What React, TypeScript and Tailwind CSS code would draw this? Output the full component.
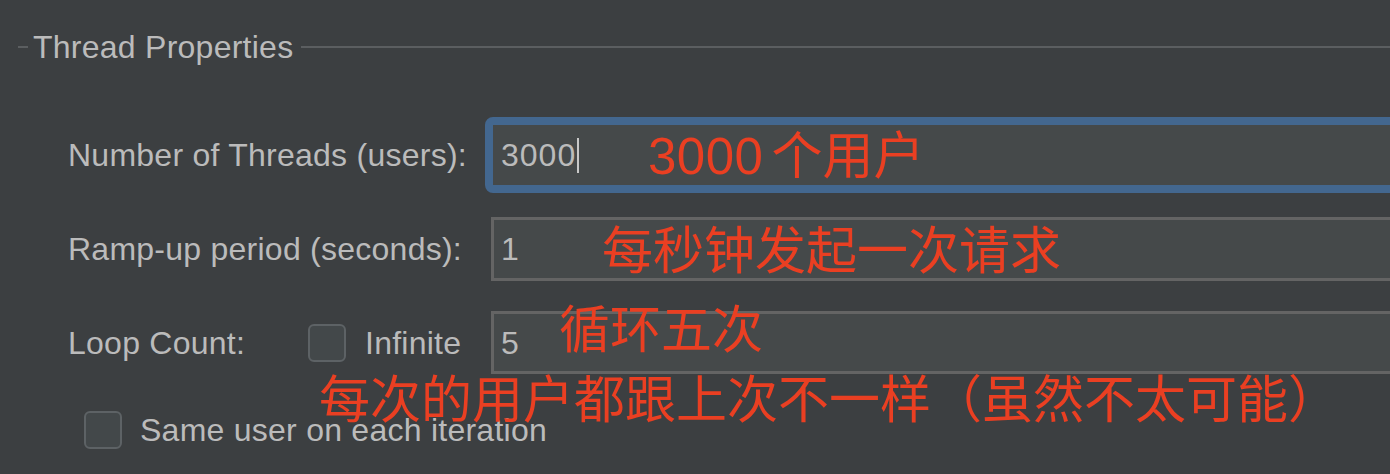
import React from "react";

const red = "text-[#ea3f22]";

function Checkbox() {
  return (
    <div className="w-[38px] h-[38px] shrink-0 rounded-[6px] border-2 border-[#5d6265] bg-[#43484a]" />
  );
}

export default function App() {
  return (
    <div
      className="relative w-[1390px] h-[474px] overflow-hidden bg-[#3c3f41] text-[#bbbbbb] text-[32px] leading-[32px] tracking-[0.25px]"
      style={{ fontFamily: '"Liberation Sans", Arial, sans-serif' }}
    >
      {/* Titled border */}
      <div className="flex items-center pt-[31px]">
        <div className="ml-[18px] w-[10px] h-[2px] bg-[#5b5e60]" />
        <span className="ml-[5px] whitespace-nowrap">Thread Properties</span>
        <div className="ml-[8px] flex-1 h-[2px] bg-[#5b5e60]" />
      </div>

      <div className="flex flex-col pl-[68px]">
        {/* Row 1 */}
        <div className="mt-[54px] flex items-center h-[76px]">
          <div className="w-[417px] shrink-0 whitespace-nowrap">Number of Threads (users):</div>
          <div className="w-[1000px] shrink-0 h-[76px] rounded-[8px] border-[8px] border-[#43678f] bg-[#45494a] flex items-center pl-[8px]">
            <span className="tracking-[1px]">3000</span>
            <span className="ml-[1px] inline-block w-[2px] h-[35px] bg-[#c8c8c8]" />
          </div>
        </div>

        {/* Row 2 */}
        <div className="mt-[24px] flex items-center h-[64px]">
          <div className="w-[423px] shrink-0 whitespace-nowrap">Ramp-up period (seconds):</div>
          <div className="w-[1000px] shrink-0 h-[64px] border-[3px] border-[#646464] bg-[#45494a] flex items-center pl-[7px]">
            <span>1</span>
          </div>
        </div>

        {/* Row 3 */}
        <div className="mt-[30px] flex items-center h-[63px]">
          <div className="w-[423px] shrink-0 flex items-center whitespace-nowrap">
            <span className="w-[240px] shrink-0">Loop Count:</span>
            <Checkbox />
            <span className="ml-[19px]">Infinite</span>
          </div>
          <div className="w-[1000px] shrink-0 h-[63px] border-[3px] border-[#646464] bg-[#45494a] flex items-center pl-[7px]">
            <span>5</span>
          </div>
        </div>
      </div>

      {/* Row 4 */}
      <div className="mt-[37px] pl-[84px] flex items-center">
        <Checkbox />
        <span className="ml-[18px] whitespace-nowrap leading-[28px]">Same user on each iteration</span>
      </div>

      {/* Red annotations (overlay) */}
      <div
        className={`absolute inset-0 pointer-events-none ${red} text-[51px] leading-[30px] whitespace-nowrap tracking-normal`}
        style={{ fontFamily: '"Liberation Sans", "Noto Sans CJK SC", sans-serif' }}
      >
        <div className="absolute left-[648px] top-[142px]">
          <span className="tracking-[0.5px]">3000</span>
          <span className="ml-[8px]">个用户</span>
        </div>
        <div className="absolute left-[602px] top-[237px]">每秒钟发起一次请求</div>
        <div className="absolute left-[559px] top-[316px]">循环五次</div>
        <div className="absolute left-[319px] top-[386px]">每次的用户都跟上次不一样（虽然不太可能）</div>
      </div>
    </div>
  );
}
